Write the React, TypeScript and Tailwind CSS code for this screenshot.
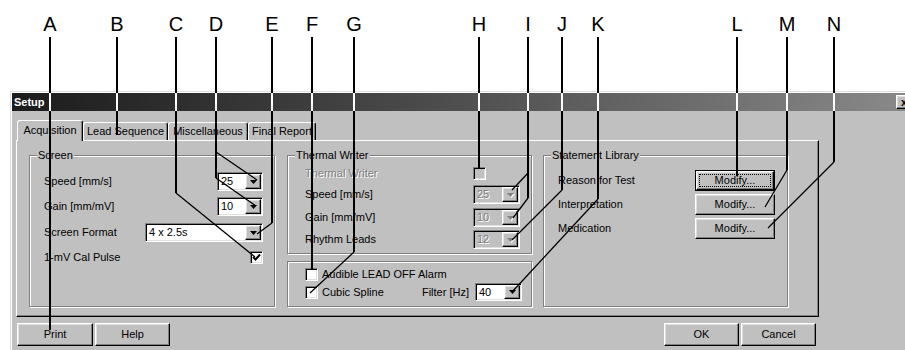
import type { ReactNode } from "react";

const raised =
  "border border-t-white border-l-white border-r-black border-b-black shadow-[inset_-1px_-1px_0_#808080,inset_1px_1px_0_#dfdfdf]";
const sunken =
  "border border-t-[#808080] border-l-[#808080] border-r-white border-b-white shadow-[inset_1px_1px_0_#000,inset_-1px_-1px_0_#dfdfdf]";
const etched = "relative border border-[#808080] shadow-[1px_1px_0_#fff,inset_1px_1px_0_#fff]";
const disabledText = "text-[#808080] [text-shadow:1px_1px_0_#fff]";

// callout letters and the x of their leader lines
const letters: [string, number][] = [
  ["A", 50],
  ["B", 117],
  ["C", 176],
  ["D", 216],
  ["E", 272],
  ["F", 312],
  ["G", 354],
  ["H", 479],
  ["I", 528],
  ["J", 562],
  ["K", 598],
  ["L", 737],
  ["M", 787],
  ["N", 834],
];

// vertical part of every leader: x, bottom y
const verticals: [number, number][] = [
  [50, 330],
  [117, 135],
  [176, 193],
  [216, 178],
  [272, 223],
  [312, 270],
  [354, 252],
  [479, 169],
  [528, 198],
  [562, 190],
  [598, 199],
  [737, 176],
  [787, 170],
  [834, 162],
];

// slanted ends: x1, y1, x2, y2
const diagonals: [number, number, number, number][] = [
  [176, 193, 255, 257],
  [216, 152, 257, 180],
  [216, 178, 256, 206],
  [272, 223, 257, 234],
  [354, 252, 310, 293],
  [528, 173, 512, 190],
  [528, 198, 513, 218],
  [562, 190, 512, 240],
  [598, 199, 512, 292],
  [787, 170, 765, 207],
  [834, 162, 768, 228],
];

function Arrow({ disabled }: { disabled?: boolean }) {
  return (
    <svg width="7" height="4" viewBox="0 0 7 4" className={disabled ? "drop-shadow-[1px_1px_0_#fff]" : ""}>
      <path d="M0 0h7L3.5 4z" fill={disabled ? "#808080" : "#000"} />
    </svg>
  );
}

function Combo({ value, className, disabled }: { value: string; className: string; disabled?: boolean }) {
  return (
    <div className={`flex p-px ${sunken} ${disabled ? "bg-[#c0c0c0]" : "bg-white"} ${className}`}>
      <span className={`flex-1 self-center pl-[2px] leading-none ${disabled ? disabledText : ""}`}>{value}</span>
      <div className={`w-[16px] flex items-center justify-center bg-[#c0c0c0] ${raised}`}>
        <Arrow disabled={disabled} />
      </div>
    </div>
  );
}

function Check({ checked, disabled }: { checked?: boolean; disabled?: boolean }) {
  return (
    <div className={`w-[13px] h-[13px] shrink-0 flex items-center justify-center ${sunken} ${disabled ? "bg-[#c0c0c0]" : "bg-white"}`}>
      {checked && (
        <svg width="9" height="9" viewBox="0 0 9 9">
          <path d="M1 4l2.5 2.5L8 1.5" stroke="#000" strokeWidth="2" fill="none" />
        </svg>
      )}
    </div>
  );
}

function Button({ children, className }: { children: ReactNode; className: string }) {
  return <div className={`flex items-center justify-center bg-[#c0c0c0] ${raised} ${className}`}>{children}</div>;
}

function Tab({ children, selected, className }: { children: ReactNode; selected?: boolean; className: string }) {
  return (
    <div
      className={`flex items-center justify-center rounded-t-[3px] border-t border-l border-r border-t-white border-l-white border-r-black bg-[#c0c0c0] shadow-[inset_-1px_0_0_#808080] ${
        selected ? "relative z-10 h-[21px] -mb-px pb-[2px]" : "h-[18px]"
      } ${className}`}
    >
      {children}
    </div>
  );
}

function Row({ label, children, className = "" }: { label: ReactNode; children: ReactNode; className?: string }) {
  return (
    <div className={`flex items-center justify-between ${className}`}>
      <span>{label}</span>
      {children}
    </div>
  );
}

export default function App() {
  return (
    <div className="relative w-[905px] h-[350px] overflow-hidden bg-white font-['Liberation_Sans',Arial,sans-serif] text-[11px] text-black">
      {letters.map(([l, x]) => (
        <span key={l} className="absolute top-[14px] w-[24px] text-center text-[20px] leading-[20px]" style={{ left: x - 12 }}>
          {l}
        </span>
      ))}

      <div className="pt-[91px] pl-[10px]">
        <div className="w-[906px] h-[259px] border-t border-l border-[#dfdfdf]">
          <div className="h-full border-t border-l border-white bg-[#c0c0c0]">
            {/* Title bar */}
            <div className="flex items-center h-[18px] w-[902px] px-[2px] bg-linear-to-r from-[#1c1c1c] to-[#8a8a8a]">
              <span className="font-bold text-white">Setup</span>
              <div className={`ml-auto w-[16px] h-[14px] flex items-center justify-center bg-[#c0c0c0] ${raised}`}>
                <span className="font-bold leading-none">x</span>
              </div>
            </div>

            {/* Tabs */}
            <div className="flex items-end h-[20px] mt-[9px] pl-[5px]">
              <Tab selected className="w-[66px]">Acquisition</Tab>
              <Tab className="w-[85px]">Lead Sequence</Tab>
              <Tab className="w-[80px]">Miscellaneous</Tab>
              <Tab className="w-[68px]">Final Report</Tab>
            </div>

            {/* Tab panel */}
            <div className="ml-[4px] w-[803px] h-[177px] flex items-start border border-t-white border-l-white border-r-black border-b-black shadow-[inset_-1px_-1px_0_#808080]">
              {/* Screen */}
              <div className={`${etched} ml-[12px] mt-[14px] w-[246px] h-[152px] flex flex-col pt-[16px] pl-[14px] pr-[11px]`}>
                <span className="absolute -top-[8px] left-[7px] px-px bg-[#c0c0c0] leading-[14px]">Screen</span>
                <Row label="Speed [mm/s]" className="h-[19px]">
                  <Combo value="25" className="w-[46px] h-[19px]" />
                </Row>
                <Row label="Gain [mm/mV]" className="h-[19px] mt-[6px]">
                  <Combo value="10" className="w-[46px] h-[19px]" />
                </Row>
                <Row label="Screen Format" className="h-[19px] mt-[7px]">
                  <Combo value="4 x 2.5s" className="w-[118px] h-[19px]" />
                </Row>
                <Row label="1-mV Cal Pulse" className="h-[13px] mt-[9px]">
                  <Check checked />
                </Row>
              </div>

              {/* Thermal writer + options */}
              <div className="ml-[12px] mt-[14px] flex flex-col">
                <div className={`${etched} w-[245px] h-[99px] flex flex-col pt-[11px] pl-[17px] pr-[11px]`}>
                  <span className="absolute -top-[8px] left-[7px] px-px bg-[#c0c0c0] leading-[14px]">Thermal Writer</span>
                  <Row label={<span className={disabledText}>Thermal Writer</span>} className="h-[13px]">
                    <div className="w-[47px]">
                      <Check disabled />
                    </div>
                  </Row>
                  <Row label="Speed [mm/s]" className="h-[19px] mt-[5px]">
                    <Combo value="25" disabled className="w-[47px] h-[19px]" />
                  </Row>
                  <Row label="Gain [mm/mV]" className="h-[19px] mt-[4px]">
                    <Combo value="10" disabled className="w-[47px] h-[19px]" />
                  </Row>
                  <Row label="Rhythm Leads" className="h-[19px] mt-[3px]">
                    <Combo value="12" disabled className="w-[47px] h-[19px]" />
                  </Row>
                </div>
                <div className={`${etched} mt-[7px] w-[245px] h-[46px] flex flex-col pt-[6px] pl-[17px] pr-[9px]`}>
                  <div className="flex items-center h-[13px]">
                    <Check />
                    <span className="ml-[4px]">Audible LEAD OFF Alarm</span>
                  </div>
                  <div className="flex items-center h-[18px] mt-[2px]">
                    <Check />
                    <span className="ml-[4px]">Cubic Spline</span>
                    <span className="ml-auto">Filter [Hz]</span>
                    <Combo value="40" className="ml-[6px] w-[47px] h-[18px]" />
                  </div>
                </div>
              </div>

              {/* Statement library */}
              <div className={`${etched} ml-[11px] mt-[14px] w-[245px] h-[152px] flex flex-col pt-[14px] pl-[14px] pr-[12px]`}>
                <span className="absolute -top-[8px] left-[7px] px-px bg-[#c0c0c0] leading-[14px]">Statement Library</span>
                <Row label="Reason for Test" className="h-[21px]">
                  <div className="w-[80px] h-[21px] border border-black">
                    <div className={`h-full p-[2px] bg-[#c0c0c0] ${raised}`}>
                      <div className="h-full flex items-center justify-center border border-dotted border-black">Modify...</div>
                    </div>
                  </div>
                </Row>
                <Row label="Interpretation" className="h-[21px] mt-[3px]">
                  <Button className="w-[80px] h-[21px]">Modify...</Button>
                </Row>
                <Row label="Medication" className="h-[21px] mt-[3px]">
                  <Button className="w-[80px] h-[21px]">Modify...</Button>
                </Row>
              </div>
            </div>

            {/* Bottom buttons */}
            <div className="ml-[4px] w-[803px] mt-[6px] flex">
              <Button className="ml-px w-[76px] h-[23px]">Print</Button>
              <Button className="ml-[2px] w-[75px] h-[23px]">Help</Button>
              <Button className="ml-auto w-[75px] h-[23px]">OK</Button>
              <Button className="ml-[2px] mr-[3px] w-[75px] h-[23px]">Cancel</Button>
            </div>
          </div>
        </div>
      </div>

      {/* Leader lines */}
      <svg className="absolute inset-0 z-20 pointer-events-none" width="905" height="350">
        {verticals.map(([x, y]) => (
          <line key={`v${x}`} x1={x} y1={37} x2={x} y2={y} stroke="#000" strokeWidth="2" shapeRendering="crispEdges" />
        ))}
        {verticals.map(([x]) => (
          <line key={`w${x}`} x1={x} y1={93} x2={x} y2={111} stroke="#fff" strokeWidth="2" shapeRendering="crispEdges" />
        ))}
        {diagonals.map(([x1, y1, x2, y2]) => (
          <line key={`d${x1}${y1}`} x1={x1} y1={y1} x2={x2} y2={y2} stroke="#000" strokeWidth="1.3" />
        ))}
      </svg>
    </div>
  );
}
